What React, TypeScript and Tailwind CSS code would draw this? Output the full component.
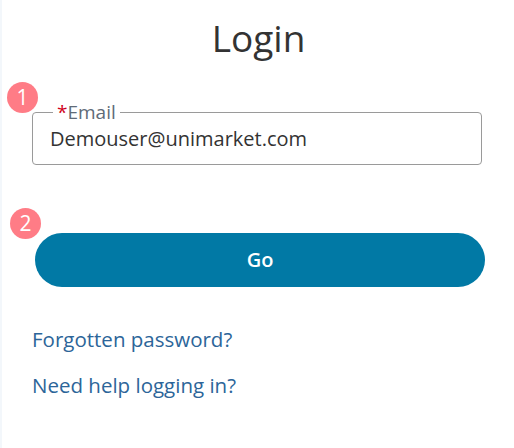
const font = { fontFamily: '"Open Sans", "Noto Sans", Arial, sans-serif' };

function Badge({ n, className }: { n: number; className: string }) {
  return (
    <div
      className={`absolute flex h-[31px] w-[31px] items-center justify-center rounded-full bg-[#ff7c86] text-[21px] leading-none text-white ${className}`}
    >
      {n}
    </div>
  );
}

export default function App() {
  return (
    <div className="flex h-[448px] w-[514px] bg-[#f3f7fb] px-[2px]" style={font}>
      <div className="relative flex-1 bg-white px-[30px] pt-[14px]">
        <h1 className="text-center text-[37px] font-normal leading-[48px] text-[#333333]">Login</h1>

        <Badge n={1} className="left-[5px] top-[82px]" />
        <Badge n={2} className="left-[8px] top-[208px]" />

        <fieldset className="mt-[40px] w-[450px] rounded-[4px] border border-[#9a9a9a] px-[17px] pb-[8px]">
          <legend className="ml-[3px] px-[4px] text-[19px] leading-[20px] text-[#606b78]">
            <span className="text-[#d0021b]">*</span>Email
          </legend>
          <div className="flex h-[34px] items-center text-[20px] text-[#333333]">Demouser@unimarket.com</div>
        </fieldset>

        <button className="ml-[3px] mt-[68px] flex h-[54px] w-[450px] items-center justify-center rounded-full bg-[#0179a5] text-[20px] font-semibold text-white">
          Go
        </button>

        <div className="mt-[38px] flex flex-col items-start gap-[18px] text-[20.5px] leading-[28px] text-[#2c6599]">
          <a>Forgotten password?</a>
          <a>Need help logging in?</a>
        </div>
      </div>
    </div>
  );
}
